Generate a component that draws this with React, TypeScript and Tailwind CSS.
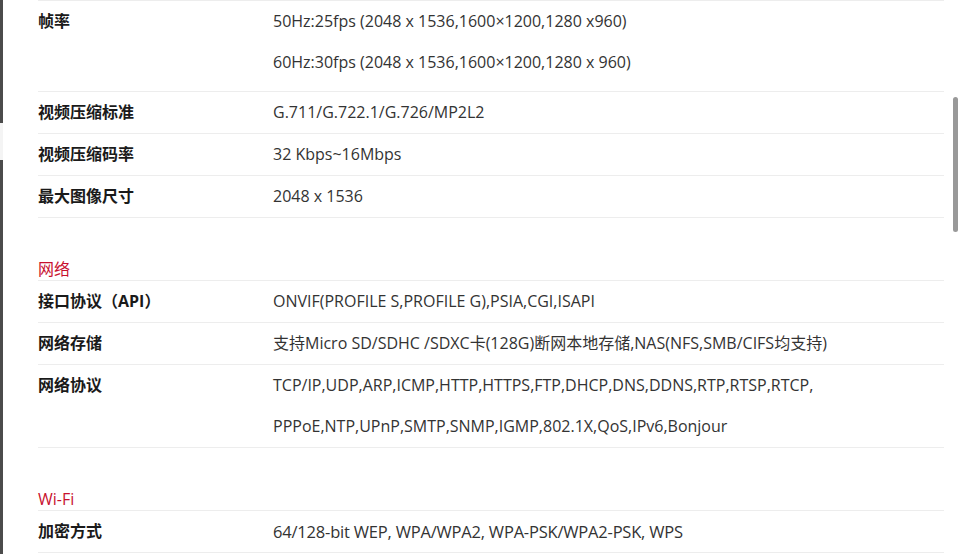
import React from "react";

type Row = { label: string; values: string[]; narrow?: boolean };
type Section = { title?: string; rows: Row[] };

const sections: Section[] = [
  {
    rows: [
      {
        label: "帧率",
        values: [
          "50Hz:25fps (2048 x 1536,1600×1200,1280 x960)",
          "60Hz:30fps (2048 x 1536,1600×1200,1280 x 960)",
        ],
      },
      { label: "视频压缩标准", values: ["G.711/G.722.1/G.726/MP2L2"] },
      { label: "视频压缩码率", values: ["32 Kbps~16Mbps"] },
      { label: "最大图像尺寸", values: ["2048 x 1536"] },
    ],
  },
  {
    title: "网络",
    rows: [
      { label: "接口协议（API）", values: ["ONVIF(PROFILE S,PROFILE G),PSIA,CGI,ISAPI"] },
      {
        label: "网络存储",
        values: ["支持Micro SD/SDHC /SDXC卡(128G)断网本地存储,NAS(NFS,SMB/CIFS均支持)"],
      },
      {
        label: "网络协议",
        values: [
          "TCP/IP,UDP,ARP,ICMP,HTTP,HTTPS,FTP,DHCP,DNS,DDNS,RTP,RTSP,RTCP,",
          "PPPoE,NTP,UPnP,SMTP,SNMP,IGMP,802.1X,QoS,IPv6,Bonjour",
        ],
      },
    ],
  },
  {
    title: "Wi-Fi",
    rows: [
      {
        label: "加密方式",
        values: ["64/128-bit WEP, WPA/WPA2, WPA-PSK/WPA2-PSK, WPS"],
        narrow: true,
      },
    ],
  },
];

const SpecRow = ({ row, first }: { row: Row; first: boolean }) => (
  <div
    className={`flex border-b border-[#ededed] ${first && row.values.length > 1 ? "pb-[8px]" : ""}`}
  >
    <div className="w-[235px] shrink-0 leading-[41px] font-bold text-[#1a1a1a]">{row.label}</div>
    <div
      className={`flex flex-col text-[#333] ${row.narrow ? "text-[16.5px] tracking-[-0.2px]" : ""}`}
    >
      {row.values.map((v) => (
        <span key={v} className="leading-[41px] whitespace-nowrap">
          {v}
        </span>
      ))}
    </div>
  </div>
);

export default function App() {
  return (
    <div
      className="flex h-[554px] w-[959px] overflow-hidden bg-white text-[16px]"
      style={{ fontFamily: '"Open Sans", "Noto Sans CJK SC", sans-serif' }}
    >
      <div className="flex w-[3px] shrink-0 flex-col">
        <div className="h-[123px] bg-[#4b4b4b]" />
        <div className="h-[37px] bg-[#f4f4f4]" />
        <div className="flex-1 bg-[#4b4b4b]" />
      </div>

      <div className="ml-[35px] w-[906px] shrink-0">
        <div className="border-t border-[#ededed]">
          {sections.map((s, si) => (
            <div key={si}>
              {s.title && (
                <div className="mt-[40px] border-b border-[#ededed] leading-[22px] text-[#c8102e]">
                  {s.title}
                </div>
              )}
              {s.rows.map((r, ri) => (
                <SpecRow key={r.label} row={r} first={si === 0 && ri === 0} />
              ))}
            </div>
          ))}
        </div>
      </div>

      <div className="ml-auto mr-[1px] w-[5px] shrink-0 pt-[97px]">
        <div className="h-[135px] rounded-full bg-[#999]" />
      </div>
    </div>
  );
}
